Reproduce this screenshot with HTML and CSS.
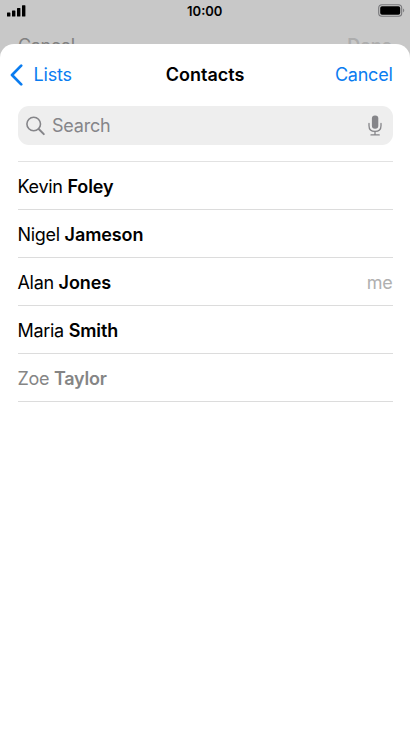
FILE: index.html
```html
<!DOCTYPE html>
<html lang="en">
<head>
<meta charset="utf-8">
<meta name="viewport" content="width=device-width, initial-scale=1">
<title>Contacts</title>
<link rel="stylesheet" href="styles.css">
</head>
<body>
<div class="screen">
  <header class="status">
    <svg class="signal" width="19" height="12" viewBox="0 0 19 12"><rect x="0" y="7.5" width="3.4" height="4" rx=".5"/><rect x="5" y="5.5" width="3.4" height="6" rx=".5"/><rect x="10" y="3" width="3.4" height="8.5" rx=".5"/><rect x="15" y="0.3" width="3.4" height="11.2" rx=".5"/></svg>
    <time>10:00</time>
    <svg class="battery" width="27" height="13" viewBox="0 0 27 13"><rect x=".7" y=".7" width="23" height="11.6" rx="3.3" fill="none" stroke="#77777a" stroke-width="1.1"/><rect x="2.2" y="2.2" width="20" height="8.6" rx="1.8"/><path d="M25.1 4.6c1.5.6 1.5 3.2 0 3.8z" fill="#77777a"/></svg>
  </header>
  <div class="behind"><span>Cancel</span><span class="done">Done</span></div>
  <main class="sheet">
    <nav class="nav">
      <a class="back"><svg width="14" height="22" viewBox="0 0 14 22"><path d="M11.2 1.6 2 11l9.2 9.4" fill="none" stroke="#0a7cf0" stroke-width="2.7" stroke-linecap="round" stroke-linejoin="round"/></svg><span>Lists</span></a>
      <h1>Contacts</h1>
      <a class="cancel">Cancel</a>
    </nav>
    <div class="search">
      <svg width="20" height="20" viewBox="0 0 20 20" fill="none" stroke="#858589" stroke-linecap="round"><circle cx="7.7" cy="8" r="6.8" stroke-width="1.6"/><path d="m12.7 13 5.1 5.1" stroke-width="2"/></svg>
      <span>Search</span>
      <svg class="mic" width="14" height="21" viewBox="0 0 14 21"><rect x="3.9" y="0.6" width="6.4" height="13.2" rx="3" fill="#858589"/><path d="M1 8.4v2.3c0 3.8 2.5 5.7 6 5.7s6-1.9 6-5.7V8.4M7 16.4v3.4M3 19.9h8.2" fill="none" stroke="#858589" stroke-width="1.3" stroke-linecap="round"/></svg>
    </div>
    <ul class="list">
      <li><span>Kevin <b>Foley</b></span></li>
      <li><span>Nigel <b>Jameson</b></span></li>
      <li><span>Alan <b>Jones</b></span><span class="me">me</span></li>
      <li><span>Maria <b>Smith</b></span></li>
      <li class="muted"><span>Zoe <b>Taylor</b></span></li>
    </ul>
  </main>
</div>
</body>
</html>
```
FILE: styles.css
```css
* { box-sizing: border-box; }
body { margin: 0; font-family: Inter, "Liberation Sans", sans-serif; font-size: 18px; color: #000; background: #fff; }
.screen { height: 729px; display: flex; flex-direction: column; background: #c8c8c8; overflow: hidden; }
.status { height: 23px; flex: none; display: grid; grid-template-columns: 1fr auto 1fr; align-items: start; padding: 4px 5.5px 0 7px; }
.signal { margin-top: 1px; }
.status time { font-size: 13px; line-height: 15px; font-weight: 600; transform: translateX(-1px); }
.battery { justify-self: end; }
.behind { height: 20.5px; flex: none; padding: 12px 18px 0; display: flex; justify-content: space-between; line-height: 22px; color: #818181; letter-spacing: -.4px; }
.done { font-weight: 600; color: #adadad; letter-spacing: -.2px; }
.sheet { flex: 1; position: relative; background: #fff; border-radius: 14px 14px 0 0; padding: 0 17.5px; }
.nav { height: 62.5px; display: grid; grid-template-columns: 1fr auto 1fr; align-items: center; margin: 0 0 0 -8px; color: #0a7cf0; }
.back { display: flex; align-items: center; gap: 10px; letter-spacing: -.2px; }
.nav h1 { margin: 0; font-size: 18px; font-weight: 600; color: #000; letter-spacing: 0; transform: translateX(4px); }
.cancel { justify-self: end; letter-spacing: -.25px; }
.search { height: 39px; border-radius: 11px; background: #eee; display: flex; align-items: center; gap: 6.5px; padding: 0 11px 0 8px; color: #858589; letter-spacing: -.2px; }
.mic { margin-left: auto; }
.list { list-style: none; margin: 16px 0 0; padding: 0; border-top: 1px solid #e2e2e2; }
.list li { height: 48px; padding-top: 1px; display: flex; align-items: center; justify-content: space-between; border-bottom: 1px solid #dcdcdc; letter-spacing: -.3px; }
.list b { font-weight: 600; letter-spacing: -.1px; }
.list .muted { color: #858585; }
.list .muted b { letter-spacing: -.25px; }
.me { color: #b0b0b0; }
```
